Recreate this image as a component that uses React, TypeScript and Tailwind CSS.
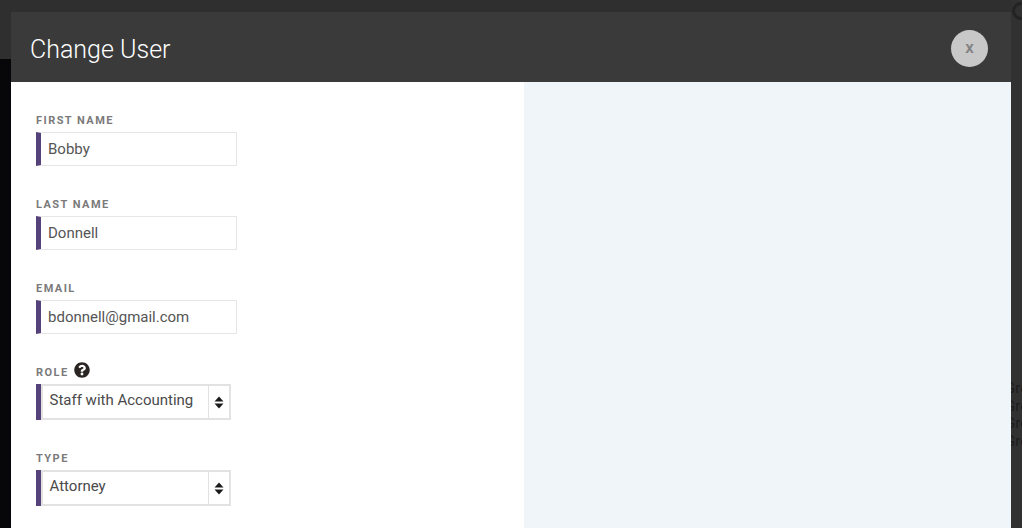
import React from 'react';
import { FaQuestionCircle } from 'react-icons/fa';

const font = { fontFamily: 'Roboto, sans-serif' };

const TextField = ({ label, value }: { label: string; value: string }) => (
  <div className="mb-[32px]">
    <label className="block text-[11px] leading-[13px] font-bold tracking-[1.45px] text-[#7a7a7a] mb-[5px]">{label}</label>
    <div className="w-[201px] h-[34px] flex border border-l-[5px] border-[#e6e6e6] border-l-[#55427a] box-border">
      <span className="pl-[7px] text-[15px] leading-[32px] text-[#555555]">{value}</span>
    </div>
  </div>
);

const SelectField = ({ value }: { value: string }) => (
  <div className="w-[195px] h-[36px] flex border-l-[5px] border-l-[#55427a] box-border">
    <div className="flex flex-1 border-2 border-[#e2e2e2]">
      <span className="flex-1 pl-[6.5px] text-[15px] leading-[29px] text-[#4a4a4a]">{value}</span>
      <div className="w-[21px] border-l border-[#e2e2e2] flex items-center justify-center">
        <svg width="10" height="13" viewBox="0 0 10 13" fill="#1a1a1a">
          <path d="M5 0.5 L9.5 5.5 L0.5 5.5 Z" />
          <path d="M0.5 7.5 L9.5 7.5 L5 12.5 Z" />
        </svg>
      </div>
    </div>
  </div>
);

export default function App() {
  return (
    <div style={font} className="w-[1022px] h-[528px] overflow-hidden flex bg-[#07070a]">
      <div className="w-[11px] h-[59px] bg-[#2f2f2f]" />
      <div className="flex-1 flex flex-col">
        <div className="h-[12px] bg-[#2f2f2f]" />
        <div className="h-[70px] bg-[#3a3a3a] flex items-center justify-between pl-[19px] pr-[23px]">
          <h1 className="text-[25px] leading-[30px] mt-[6px] font-light text-white">Change User</h1>
          <button className="w-[37px] h-[37px] mt-[2px] rounded-full bg-[#c8c8c8] text-[#808080] text-[17px] font-medium flex items-center justify-center">x</button>
        </div>
        <div className="flex-1 flex bg-white">
          <div className="w-[513px] pl-[25px] pt-[32px]">
            <TextField label="FIRST NAME" value="Bobby" />
            <TextField label="LAST NAME" value="Donnell" />
            <TextField label="EMAIL" value="bdonnell@gmail.com" />
            <div className="flex items-end mb-[5px] h-[13px]">
              <label className="text-[11px] leading-[13px] font-bold tracking-[1.45px] text-[#7a7a7a]">ROLE</label>
              <FaQuestionCircle className="ml-[5px] mb-[1px] text-[#2a2522] shrink-0" size={16} />
            </div>
            <SelectField value="Staff with Accounting" />
            <label className="block mt-[32px] mb-[5px] text-[11px] leading-[13px] font-bold tracking-[1.45px] text-[#7a7a7a]">TYPE</label>
            <SelectField value="Attorney" />
          </div>
          <div className="flex-1 bg-[#f0f5f9]" />
        </div>
      </div>
      <div className="w-[11px] bg-[#313131] overflow-hidden">
        <div className="w-[18px] h-[18px] mt-[2px] ml-[1px] rounded-full border-[3px] border-[#232323]" />
        <div className="mt-[360px] -ml-[6px] text-[15px] leading-[17.6px] text-[#1c1c1c] whitespace-nowrap">
          <div>Gro</div>
          <div>Gro</div>
          <div>Gro</div>
          <div>Gro</div>
        </div>
      </div>
    </div>
  );
}
